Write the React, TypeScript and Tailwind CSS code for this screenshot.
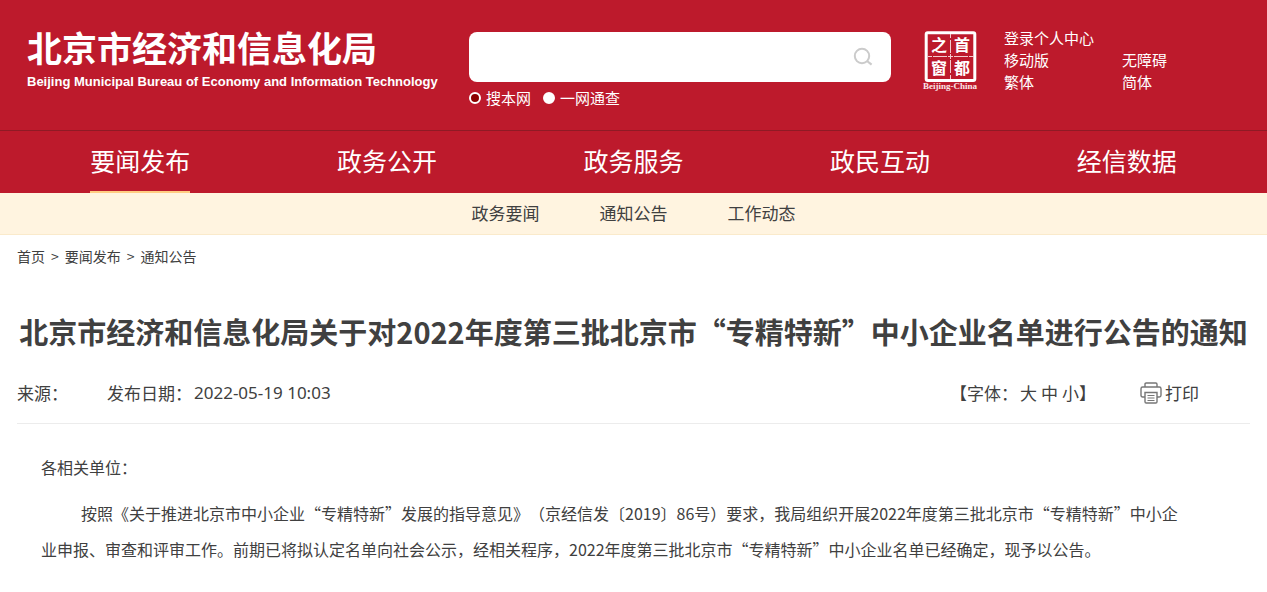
const navItems = ['要闻发布', '政务公开', '政务服务', '政民互动', '经信数据'];
const subItems = ['政务要闻', '通知公告', '工作动态'];
const crumbs = ['首页', '要闻发布', '通知公告'];

function Seal() {
  return (
    <svg viewBox="0 0 58 60" className="h-[60px] w-[58px]" role="img" aria-label="首都之窗 Beijing-China">
      <rect x="4.2" y="1.8" width="48.6" height="47.6" rx="1.5" fill="none" stroke="#fff" strokeWidth="3" />
      <path d="M28.500 3v4M28.500 9v13M28.500 23v5M28.500 29v13M28.500 44v4M6 25.500h4M11 25.500h14M26 25.500h5M32 25.500h14M47 25.500h5" stroke="#f3c9cd" strokeWidth="1" />
      <g fill="#fff" fontFamily='"Noto Sans CJK SC", sans-serif' fontWeight="700" fontSize="16" textAnchor="middle">
        <text x="17" y="20">之</text>
        <text x="40" y="20">首</text>
        <text x="17" y="43">窗</text>
        <text x="40" y="43">都</text>
      </g>
      <text x="28" y="58" fill="#fbe6e8" fontFamily='"Liberation Serif", serif' fontWeight="700" fontSize="9" textAnchor="middle">
        Beijing-China
      </text>
    </svg>
  );
}

function SearchIcon() {
  return (
    <svg viewBox="0 0 20 20" className="size-5" fill="none" stroke="#cbcbcb" strokeWidth="2" aria-hidden="true">
      <circle cx="9" cy="9" r="7.2" />
      <path d="M14 14 18.600 17.600" strokeWidth="2.2" />
    </svg>
  );
}

function PrinterIcon() {
  return (
    <svg viewBox="0 0 22 22" className="size-[22px]" fill="none" stroke="#777" strokeWidth="1.4" aria-hidden="true">
      <path d="M5 5V2.200Q5 1 6.200 1h9.600Q17 1 17 2.200V5" />
      <path d="M5 15H2.700Q1 15 1 13.300V6.700Q1 5 2.700 5h16.600Q21 5 21 6.700v6.600Q21 15 19.300 15H17" />
      <path d="M5 10.500h12v9.300q0 1.200-1.200 1.200H6.200Q5 21 5 19.800z" />
      <path d="M7.500 13.500h7M7.500 16h7M7.500 18.500h7" strokeWidth="1.1" />
    </svg>
  );
}

export default function App() {
  return (
    <div
      lang="zh-CN"
      className="min-h-screen bg-white font-['Noto_Sans_CJK_SC',sans-serif] text-[#404040] [text-spacing-trim:space-all]"
    >
      <header className="bg-[#bd1a2c] text-white">
        <div className="grid grid-cols-[452fr_453fr_328fr] px-[17px] pt-7 pb-5">
          <a href="#" className="flex flex-col pl-2.5 whitespace-nowrap">
            <span className="text-[35px] leading-[38px] font-bold">北京市经济和信息化局</span>
            <span className="mt-1.5 font-['Liberation_Sans',sans-serif] text-[13px] leading-5 font-bold">
              Beijing Municipal Bureau of Economy and Information Technology
            </span>
          </a>
          <form className="pt-1 pr-[31px]" onSubmit={(e) => e.preventDefault()}>
            <div className="flex h-[50px] items-center rounded-lg bg-white pr-[18px]">
              <input type="text" aria-label="搜索" className="h-full min-w-0 flex-1 rounded-lg px-4 text-base text-[#404040] outline-none" />
              <button type="submit" aria-label="搜索">
                <SearchIcon />
              </button>
            </div>
            <div className="mt-1 flex text-[15px] leading-6">
              <label className="mr-3 flex items-center gap-[5px]">
                <input type="radio" name="scope" defaultChecked className="size-3 appearance-none rounded-full border-2 border-white bg-white checked:bg-[#8b0000]" />
                搜本网
              </label>
              <label className="flex items-center gap-[5px]">
                <input type="radio" name="scope" className="size-3 appearance-none rounded-full border-2 border-white bg-white checked:bg-[#8b0000]" />
                一网通查
              </label>
            </div>
          </form>
          <div className="-mt-px flex items-start">
            <a href="#" className="mt-1 shrink-0">
              <Seal />
            </a>
            <div className="ml-6 grid grid-cols-[118px_auto] text-[15px] leading-[22px] whitespace-nowrap">
              <a href="#" className="col-span-2">登录个人中心</a>
              <a href="#">移动版</a>
              <a href="#">无障碍</a>
              <a href="#">繁体</a>
              <a href="#">简体</a>
            </div>
          </div>
        </div>
        <nav className="grid grid-cols-5 border-t border-[#8f1a25] px-[17px] text-[25px]">
          {navItems.map((item, i) => (
            <div key={item} className="flex justify-center">
              <a
                href="#"
                className={i === 0 ? 'h-[62px] border-b-2 border-[#ffcd82] leading-[58px]' : 'h-[62px] leading-[58px]'}
              >
                {item}
              </a>
            </div>
          ))}
        </nav>
      </header>
      <nav className="flex h-[42px] justify-center gap-[60px] border-b border-[#faeacb] bg-[#fff4e0] text-[17px] leading-10">
        {subItems.map((item) => (
          <a key={item} href="#">{item}</a>
        ))}
      </nav>
      <main className="px-[17px]">
        <nav className="flex gap-1.5 pt-2.5 text-[14px] leading-[22px]">
          {crumbs.map((item, i) => (
            <span key={item} className="flex gap-1.5">
              {i > 0 && <span>&gt;</span>}
              <a href="#">{item}</a>
            </span>
          ))}
        </nav>
        <h1 className="mt-[43px] text-center text-[29px] leading-[42px] font-bold">
          北京市经济和信息化局关于对2022年度第三批北京市“专精特新”中小企业名单进行公告的通知
        </h1>
        <div className="mt-[29px] flex items-center border-b border-[#ececec] pb-[18px] text-[17px] leading-6">
          <span>来源：</span>
          <span className="ml-[39px]">发布日期：</span>
          <time className="ml-0.5 font-['Noto_Sans',sans-serif]">2022-05-19 10:03</time>
          <div className="ml-auto flex items-center">
            <span>【字体：</span>
            <span className="ml-0.5 flex gap-1">
              <button type="button">大</button>
              <button type="button">中</button>
              <button type="button">小</button>
            </span>
            <span>】</span>
          </div>
          <button type="button" className="mr-[51px] ml-11 flex items-center gap-[3px]">
            <PrinterIcon />
            打印
          </button>
        </div>
        <article className="space-y-2.5 pt-[25px] pr-[70px] pl-6 text-base leading-9">
          <p>各相关单位：</p>
          <p className="indent-10">
            按照《关于推进北京市中小企业“专精特新”发展的指导意见》（京经信发〔2019〕86号）要求，我局组织开展2022年度第三批北京市“专精特新”中小企业申报、审查和评审工作。前期已将拟认定名单向社会公示，经相关程序，2022年度第三批北京市“专精特新”中小企业名单已经确定，现予以公告。
          </p>
        </article>
      </main>
    </div>
  );
}
